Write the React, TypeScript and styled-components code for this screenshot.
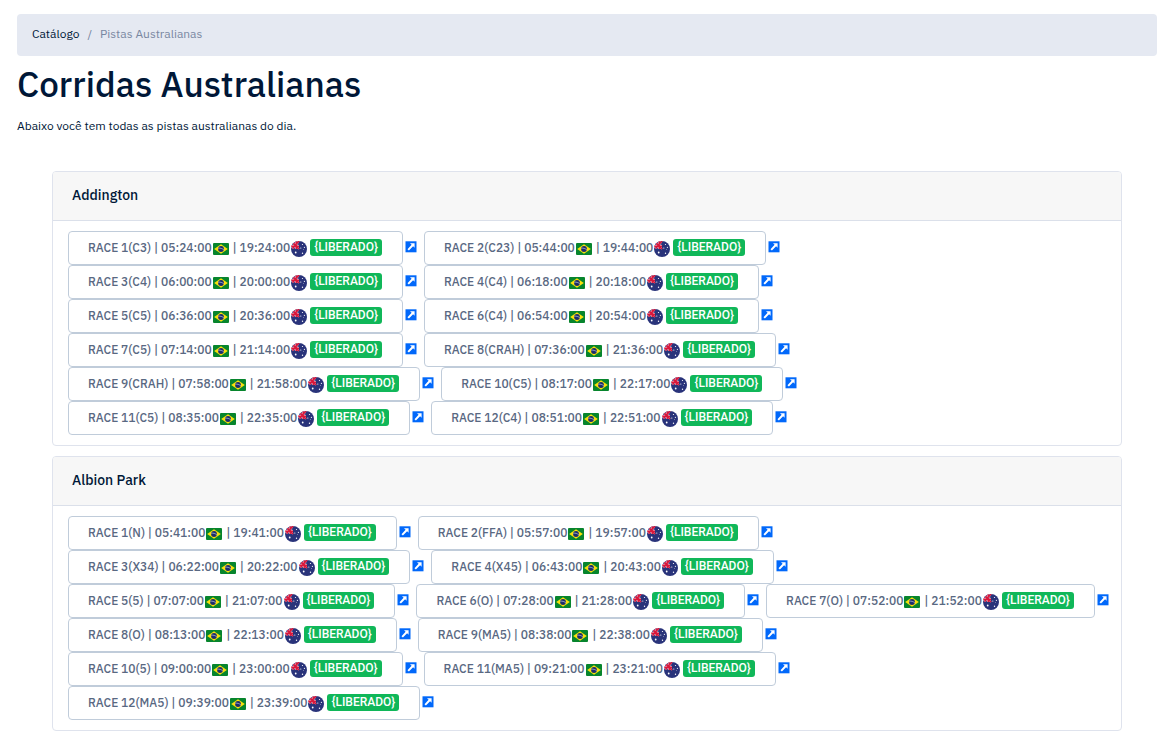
import React from "react";
import styled, { createGlobalStyle } from "styled-components";

const GlobalStyle = createGlobalStyle`
  * { box-sizing: border-box; }
  body {
    margin: 0;
    background: #fff;
    color: #001737;
    font-family: "IBM Plex Sans", Inter, "Liberation Sans", sans-serif;
    font-size: 12px;
    line-height: 18px;
  }
`;

const Page = styled.main`
  padding: 14px 13px 7px 17px;
`;

const Breadcrumb = styled.ol`
  display: flex;
  gap: 8px;
  margin: 0 0 6px;
  padding: 11px 15px 13px;
  list-style: none;
  background: #e5e9f2;
  border-radius: 4px;
`;

const Crumb = styled.li`
  display: flex;
  gap: 8px;
  color: #7987a1;
`;

const CrumbLink = styled.a`
  color: #001737;
  text-decoration: none;
`;

const Title = styled.h1`
  margin: 0 0 11px;
  font-size: 35px;
  font-weight: 500;
  line-height: 44px;
`;

const Lead = styled.p`
  margin: 0 0 36px;
`;

const Tracks = styled.div`
  display: grid;
  gap: 10px;
  padding: 0 35px;
`;

const Card = styled.section`
  border: 1px solid #dfe3ed;
  border-radius: 4px;
  overflow: hidden;
`;

const CardTitle = styled.h2`
  margin: 0;
  padding: 14px 19px 15px;
  font-size: 14px;
  font-weight: 500;
  line-height: 19px;
  background: #f7f7f7;
  border-bottom: 1px solid #dbe0ea;
`;

const Races = styled.div`
  display: flex;
  flex-wrap: wrap;
  column-gap: 7px;
  padding: 10px 8px 10px 15px;
`;

const Race = styled.div`
  display: flex;
  gap: 2px;
`;

const RaceButton = styled.button`
  display: flex;
  align-items: center;
  height: 34px;
  padding: 0 20px 0 19px;
  font: inherit;
  font-weight: 500;
  color: #596882;
  white-space: pre;
  background: #fff;
  border: 1px solid #c0ccda;
  border-radius: 4px;
`;

const Badge = styled.span`
  margin-left: 2px;
  margin-bottom: 2px;
  padding: 0 4px;
  font-family: Roboto, sans-serif;
  font-size: 12px;
  font-weight: 500;
  line-height: 17px;
  color: #fff;
  background: #10b759;
  border-radius: 3px;
`;

const OpenLink = styled.a`
  display: block;
  height: 12px;
  margin-top: 10px;
`;

const Icon = styled.svg`
  display: block;
`;

const FlagIcon = styled(Icon)`
  margin: 2px 1px 0;
`;

const BrazilFlag = () => (
  <FlagIcon width="16" height="16" viewBox="0 0 16 16" role="img" aria-label="Brasil">
    <rect y="2" width="16" height="12" rx="1" fill="#07852d" />
    <path d="M8 3.300 14.800 8 8 12.700 1.200 8Z" fill="#fbe10b" />
    <circle cx="8" cy="8" r="2.900" fill="#1d2d6b" />
    <path d="M5.200 7.200C7.200 6.900 9.500 7.500 10.800 8.900" fill="none" stroke="#dce6f0" strokeWidth="0.600" />
  </FlagIcon>
);

const AustraliaFlag = () => (
  <FlagIcon width="16" height="16" viewBox="0 0 16 16" role="img" aria-label="Austrália">
    <circle cx="8" cy="8" r="8" fill="#29337a" />
    <path d="M8 0v8H0A8 8 0 0 1 8 0Z" fill="#4a4d8b" />
    <path d="M2.400 2.400 8 8M8 0 1.500 7.500" stroke="#e9a9b8" strokeWidth="1.500" />
    <path d="M5.200 0.500V8M0 5.200H8" stroke="#f3ccd5" strokeWidth="2.400" />
    <path d="M5.200 0.500V8M0.300 5.200H8M2.400 2.400 8 8M8 0 1.500 7.500" stroke="#d8173b" strokeWidth="1.500" />
    <g fill="#fff">
      <circle cx="4.700" cy="11.500" r="0.900" />
      <circle cx="11.500" cy="3.500" r="0.600" />
      <circle cx="9.800" cy="7" r="0.600" />
      <circle cx="13.400" cy="6.300" r="0.600" />
      <circle cx="11.500" cy="12.300" r="0.700" />
      <circle cx="12.500" cy="8.600" r="0.400" />
    </g>
  </FlagIcon>
);

const OpenIcon = () => (
  <Icon width="12" height="12" viewBox="0 0 12 12" aria-hidden="true">
    <rect x="0.500" y="0.300" width="11" height="11" fill="#0168fa" />
    <path d="M5 2.200H9.600V6.800L8.100 5.300 3.900 9.600 2.500 8.200 6.600 3.800Z" fill="#fff" />
  </Icon>
);

type RaceInfo = [name: string, brazil: string, australia: string];

const tracks: { name: string; races: RaceInfo[] }[] = [
  {
    name: "Addington",
    races: [
      ["1(C3)", "05:24:00", "19:24:00"],
      ["2(C23)", "05:44:00", "19:44:00"],
      ["3(C4)", "06:00:00", "20:00:00"],
      ["4(C4)", "06:18:00", "20:18:00"],
      ["5(C5)", "06:36:00", "20:36:00"],
      ["6(C4)", "06:54:00", "20:54:00"],
      ["7(C5)", "07:14:00", "21:14:00"],
      ["8(CRAH)", "07:36:00", "21:36:00"],
      ["9(CRAH)", "07:58:00", "21:58:00"],
      ["10(C5)", "08:17:00", "22:17:00"],
      ["11(C5)", "08:35:00", "22:35:00"],
      ["12(C4)", "08:51:00", "22:51:00"],
    ],
  },
  {
    name: "Albion Park",
    races: [
      ["1(N)", "05:41:00", "19:41:00"],
      ["2(FFA)", "05:57:00", "19:57:00"],
      ["3(X34)", "06:22:00", "20:22:00"],
      ["4(X45)", "06:43:00", "20:43:00"],
      ["5(5)", "07:07:00", "21:07:00"],
      ["6(O)", "07:28:00", "21:28:00"],
      ["7(O)", "07:52:00", "21:52:00"],
      ["8(O)", "08:13:00", "22:13:00"],
      ["9(MA5)", "08:38:00", "22:38:00"],
      ["10(5)", "09:00:00", "23:00:00"],
      ["11(MA5)", "09:21:00", "23:21:00"],
      ["12(MA5)", "09:39:00", "23:39:00"],
    ],
  },
];

export default function App() {
  return (
    <>
      <GlobalStyle />
      <Page>
        <nav aria-label="Breadcrumb">
          <Breadcrumb>
            <Crumb>
              <CrumbLink href="#catalogo">Catálogo</CrumbLink>
            </Crumb>
            <Crumb aria-current="page">
              <span>/</span>
              <span>Pistas Australianas</span>
            </Crumb>
          </Breadcrumb>
        </nav>
        <Title>Corridas Australianas</Title>
        <Lead>Abaixo você tem todas as pistas australianas do dia.</Lead>
        <Tracks>
          {tracks.map((track) => (
            <Card key={track.name}>
              <CardTitle>{track.name}</CardTitle>
              <Races>
                {track.races.map(([name, brazil, australia]) => (
                  <Race key={name}>
                    <RaceButton type="button">
                      <span>{`RACE ${name} | ${brazil}`}</span>
                      <BrazilFlag />
                      <span>{` | ${australia}`}</span>
                      <AustraliaFlag />
                      <Badge>{"{LIBERADO}"}</Badge>
                    </RaceButton>
                    <OpenLink href="#corrida" aria-label={`Abrir corrida ${name}`}>
                      <OpenIcon />
                    </OpenLink>
                  </Race>
                ))}
              </Races>
            </Card>
          ))}
        </Tracks>
      </Page>
    </>
  );
}
